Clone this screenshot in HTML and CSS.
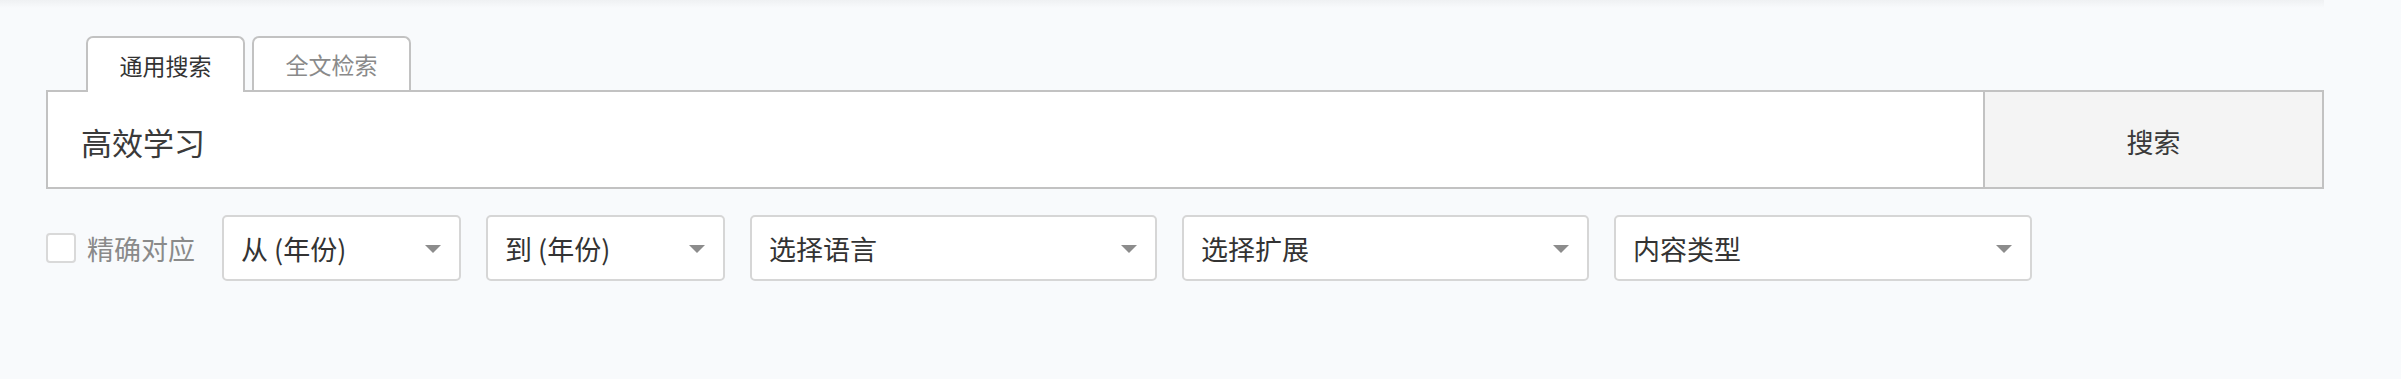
FILE: index.html
```html
<!DOCTYPE html>
<html lang="zh">
<head>
<meta charset="utf-8">
<title>搜索</title>
<link rel="stylesheet" href="styles.css">
</head>
<body>
<div class="topshade"></div>
<div class="wrap">
  <div class="tabs">
    <div class="tab active">通用搜索</div>
    <div class="tab">全文检索</div>
  </div>
  <div class="searchrow">
    <div class="query">高效学习</div>
    <div class="btn">搜索</div>
  </div>
  <div class="filters">
    <div class="check"><span class="box"></span><span class="label">精确对应</span></div>
    <div class="select w1"><span>从 (年份)</span><span class="arrow"></span></div>
    <div class="select w1"><span>到 (年份)</span><span class="arrow"></span></div>
    <div class="select w2"><span>选择语言</span><span class="arrow"></span></div>
    <div class="select w2"><span>选择扩展</span><span class="arrow"></span></div>
    <div class="select w3"><span>内容类型</span><span class="arrow"></span></div>
  </div>
</div>
</body>
</html>
```

FILE: styles.css
```css
* { box-sizing: border-box; }
html, body { margin: 0; padding: 0; }
body {
  background: #f8fafc;
  font-family: "Noto Sans CJK SC", "Noto Sans", "Liberation Sans", sans-serif;
  color: #333;
  width: 2401px;
  height: 379px;
  position: relative;
  overflow: hidden;
}
.topshade {
  height: 8px;
  width: 2324px;
  background: linear-gradient(to bottom, #eff1f3, rgba(248,250,252,0));
}
.wrap {
  width: 2278px;
  margin-left: 46px;
  padding-top: 28px;
}
.tabs {
  display: flex;
  gap: 7px;
  margin-left: 40px;
  height: 54px;
  align-items: flex-start;
}
.tab {
  width: 159px;
  height: 54px;
  border: 2px solid #c2c2c2;
  border-bottom: none;
  border-radius: 7px 7px 0 0;
  background: #fff;
  font-size: 23px;
  color: #8a8a8a;
  display: flex;
  align-items: center;
  justify-content: center;
}
.tab.active {
  height: 56px;
  color: #333;
  position: relative;
  z-index: 1;
}
.searchrow {
  display: flex;
  height: 99px;
}
.query {
  flex: 1;
  background: #fff;
  border: 2px solid #c2c2c2;
  border-right: none;
  font-size: 31px;
  color: #3a3a3a;
  display: flex;
  align-items: center;
  padding-left: 33px;
  padding-top: 3px;
}
.btn {
  width: 341px;
  background: #f4f4f4;
  border: 2px solid #c2c2c2;
  font-size: 27px;
  color: #3a3a3a;
  display: flex;
  align-items: center;
  justify-content: center;
  padding-top: 3px;
}
.filters {
  display: flex;
  align-items: center;
  margin-top: 26px;
  gap: 25px;
}
.check {
  display: flex;
  align-items: center;
  margin-right: 2px;
}
.box {
  width: 30px;
  height: 30px;
  border: 2px solid #d9d9d9;
  border-radius: 4px;
  background: #fff;
}
.label {
  margin-left: 11px;
  font-size: 27px;
  color: #8a8a8a;
}
.select {
  height: 66px;
  background: #fff;
  border: 2px solid #d6d6d6;
  border-radius: 5px;
  display: flex;
  align-items: center;
  justify-content: space-between;
  padding: 0 18px 0 17px;
  font-size: 27px;
  color: #333;
}
.w1 { width: 239px; }
.w2 { width: 407px; }
.w3 { width: 418px; }
.arrow {
  width: 0;
  height: 0;
  border-left: 8px solid transparent;
  border-right: 8px solid transparent;
  border-top: 8px solid #8c8c8c;
  margin-top: 2px;
}
```
